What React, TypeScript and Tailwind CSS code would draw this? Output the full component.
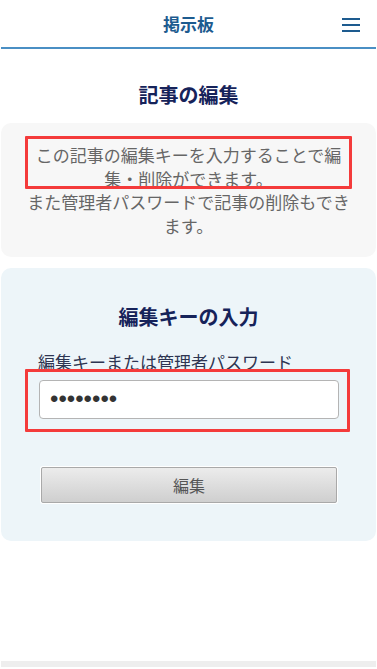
import React from "react";

export default function App() {
  const font = { fontFamily: '"Noto Sans CJK JP", "Noto Sans", sans-serif' };
  return (
    <div className="w-[377px] min-h-[669px] bg-white" style={font}>
      <header className="relative h-[49px] border-b-2 border-[#4a8fc4] mx-[1px] flex items-center justify-center">
        <span className="text-[17px] font-bold text-[#1d5b8f]">掲示板</span>
        <div className="absolute right-[16px] top-[18px] flex flex-col gap-[4px] w-[18px]">
          <span className="block h-[2px] bg-[#1d5b8f]" />
          <span className="block h-[2px] bg-[#1d5b8f]" />
          <span className="block h-[2px] bg-[#1d5b8f]" />
        </div>
      </header>

      <h1 className="mt-[32px] text-center text-[20px] leading-[28px] font-bold text-[#16235a]">記事の編集</h1>

      <section className="mt-[14px] mx-[1px] rounded-[10px] bg-[#f7f7f7] px-6 py-5 text-[17px] leading-[23.6px] text-[#666666] text-center">
        <div className="relative">
          <p className="px-1">この記事の編集キーを入力することで編集・削除ができます。</p>
          <div className="absolute -top-[7px] bottom-[1px] left-0 right-0 border-[3px] border-[#f43b3b] rounded-[1px]" />
        </div>
        <p>また管理者パスワードで記事の削除もできます。</p>
      </section>

      <section className="mt-[11px] mx-[1px] rounded-[10px] bg-[#edf5f9] pt-[35px] pb-[38px] px-[37px]">
        <h2 className="text-center text-[20px] leading-[28px] font-bold text-[#16235a]">編集キーの入力</h2>
        <label className="block mt-[19px] text-[17px] leading-[23.6px] text-[#2e3552]">編集キーまたは管理者パスワード</label>
        <div className="relative mt-[6px] ml-[1px]">
          <input
            type="password"
            readOnly
            defaultValue="abcdefgh"
            className="block w-[300px] h-[39px] rounded-[4px] border border-[#b4b4b4] bg-white px-[10px] text-[24px] text-[#333] outline-none"
            style={{ fontFamily: '"Liberation Sans", Arial, sans-serif' }}
          />
          <div className="absolute -top-[11px] -bottom-[13px] -left-[14px] -right-[11px] border-[3px] border-[#f43b3b] rounded-[1px]" />
        </div>
        <button className="mt-[48px] mx-[3px] block w-[296px] h-[36px] rounded-[2px] border border-[#a9a9a9] bg-gradient-to-b from-[#ececec] to-[#cfcfcf] text-[16px] text-[#555] shadow-[0_0_0_1px_#ffffff]">
          編集
        </button>
      </section>

      <div className="mt-[120px] mx-[1px] h-[6px] bg-[#eeeeee]" />
    </div>
  );
}
